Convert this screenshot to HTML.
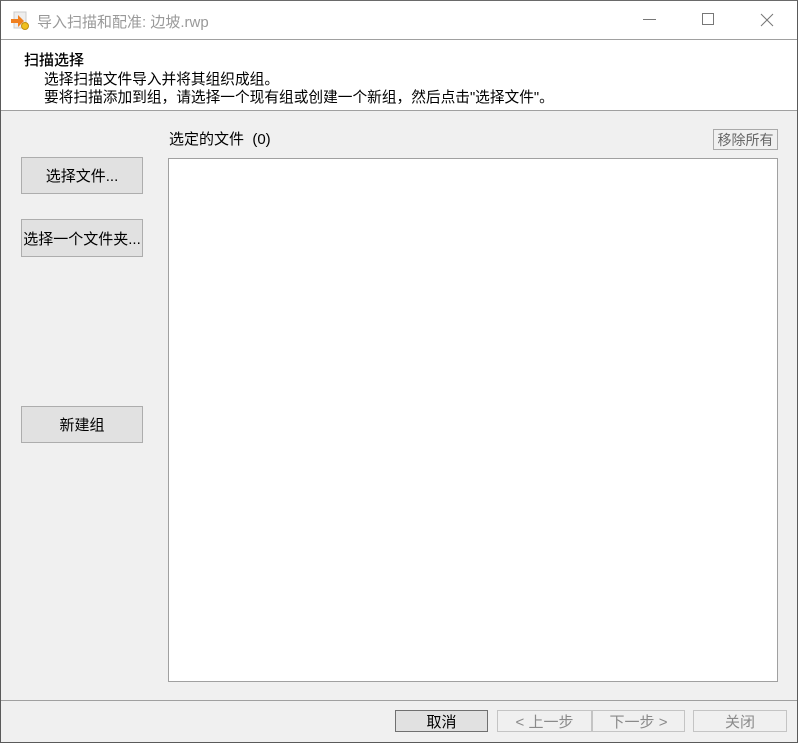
<!DOCTYPE html>
<html><head><meta charset="utf-8"><style>
*{margin:0;padding:0;box-sizing:border-box}
body{width:798px;height:743px;overflow:hidden;background:#f0f0f0;font-family:"Liberation Sans","Noto Sans CJK SC",sans-serif;font-size:15px;color:#000;position:relative}
.frame{position:absolute;left:0;top:0;width:798px;height:743px;border:1px solid #5a5a5a;border-top:1px solid #6a6a6a}
.abs{position:absolute;white-space:nowrap}
.btn{position:absolute;background:#e1e1e1;border:1px solid #adadad;display:flex;align-items:center;justify-content:center;font-size:15px;white-space:nowrap}
.dis{background:#f0f0f0;border:1px solid #c4c4c4;color:#8a8a8a}
</style></head><body>
<div class="abs" style="left:0;top:0;width:798px;height:39px;background:#fff"></div>
<svg class="abs" style="left:10px;top:11px" width="22" height="20" viewBox="0 0 22 20">
<rect x="4" y="1" width="12" height="16" fill="#eee" stroke="#ccc"/>
<path d="M1 8h7v-4l6 6-6 6v-4H1z" fill="#f08020"/>
<circle cx="15" cy="15" r="3.5" fill="#f0c020" stroke="#c09010"/>
</svg>
<div class="abs" style="left:37px;top:11px;font-size:15px;color:#999">导入扫描和配准: 边坡.rwp</div>
<div class="abs" style="left:643px;top:19px;width:13px;height:1px;background:#777"></div>
<div class="abs" style="left:702px;top:13px;width:12px;height:12px;border:1px solid #777"></div>
<svg class="abs" style="left:760px;top:13px" width="14" height="14"><path d="M1 1L13 13M13 1L1 13" stroke="#777" stroke-width="1"/></svg>
<div class="abs" style="left:0;top:39px;width:798px;height:1px;background:#a0a0a0"></div>
<div class="abs" style="left:0;top:40px;width:798px;height:70px;background:#fff"></div>
<div class="abs" style="left:0;top:110px;width:798px;height:1px;background:#a0a0a0"></div>
<div class="abs" style="left:24px;top:49px;font-weight:500">扫描选择</div>
<div class="abs" style="left:44px;top:68px;font-size:14.7px">选择扫描文件导入并将其组织成组。</div>
<div class="abs" style="left:44px;top:86px;font-size:14.7px">要将扫描添加到组，请选择一个现有组或创建一个新组，然后点击"选择文件"。</div>

<div class="btn" style="left:21px;top:157px;width:122px;height:37px">选择文件...</div>
<div class="btn" style="left:21px;top:219px;width:122px;height:38px">选择一个文件夹...</div>
<div class="btn" style="left:21px;top:406px;width:122px;height:37px">新建组</div>

<div class="abs" style="left:169px;top:128px">选定的文件 &nbsp;(0)</div>
<div class="btn dis" style="left:713px;top:129px;width:65px;height:21px;color:#666;border-color:#aaa;font-size:14px">移除所有</div>
<div class="abs" style="left:168px;top:158px;width:610px;height:524px;background:#fff;border:1px solid #a0a0a0"></div>

<div class="abs" style="left:0;top:700px;width:798px;height:1px;background:#a0a0a0"></div>
<div class="btn" style="left:395px;top:710px;width:93px;height:22px;border-color:#707070">取消</div>
<div class="btn dis" style="left:497px;top:710px;width:95px;height:22px">&lt; 上一步</div>
<div class="btn dis" style="left:592px;top:710px;width:93px;height:22px">下一步 &gt;</div>
<div class="btn dis" style="left:693px;top:710px;width:94px;height:22px">关闭</div>
<div class="frame"></div>
</body></html>
